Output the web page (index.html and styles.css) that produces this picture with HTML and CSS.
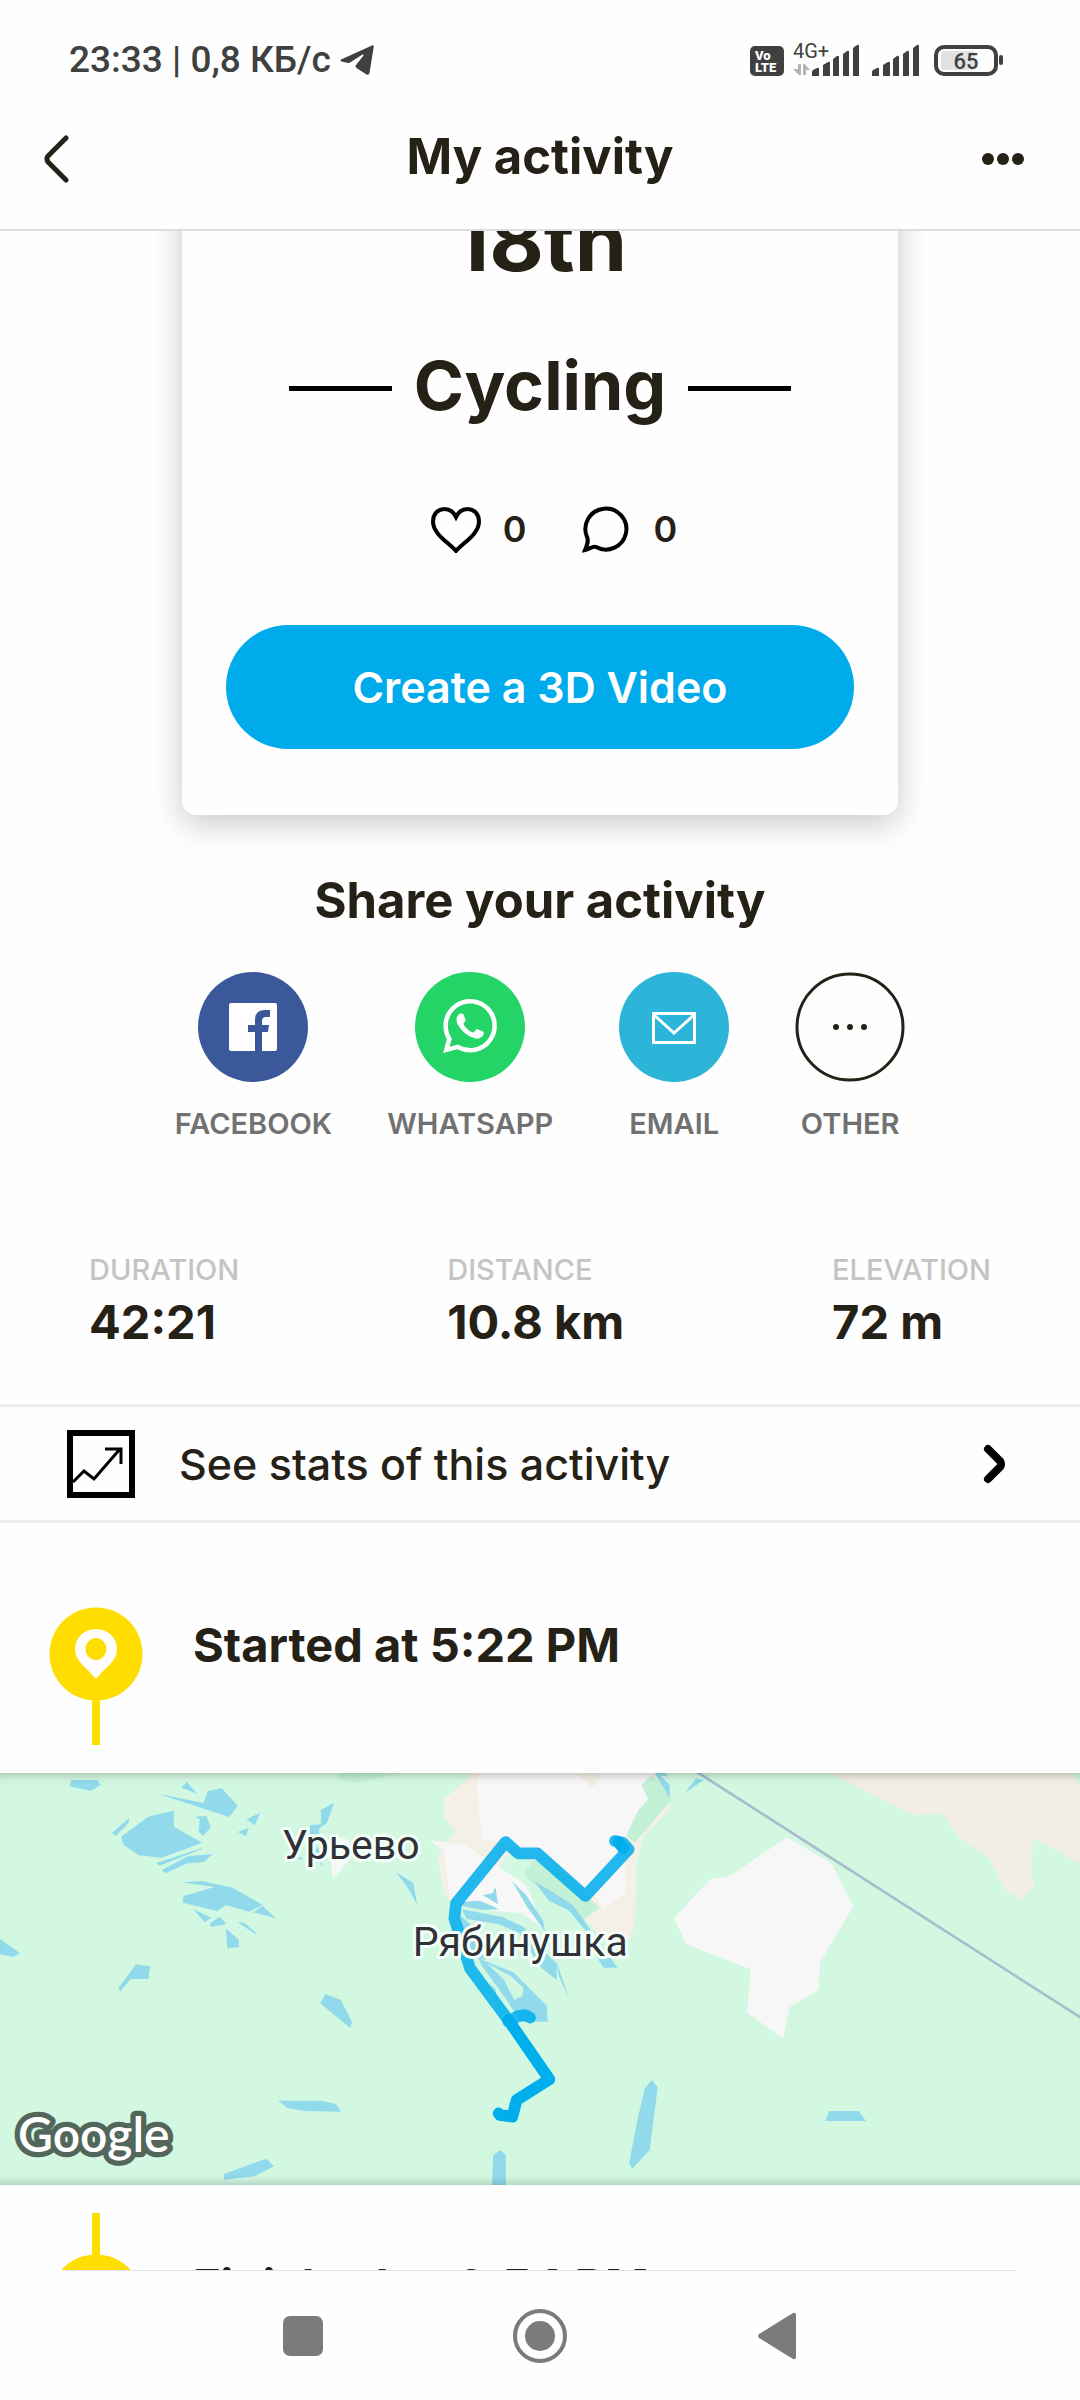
FILE: index.html
```
<!DOCTYPE html>
<html lang="en">
  <head>
    <meta charset="utf-8">
    <meta name="viewport" content="width=device-width, initial-scale=1">
    <title>My activity</title>
    <link rel="stylesheet" href="styles.css">
  </head>
  <body>
    <header class="top">
      <!-- Status bar -->
      <div class="status-bar">
        <span class="status-text">23:33 | 0,8 КБ/с</span>
        <svg class="telegram" viewBox="0 0 34 30" width="34" height="30">
          <path d="M1 14.500 32 .5q2-1 1.700 1.500L29.500 28q-.5 2.500-3 1.500L16.500 23q-2-1.500-.5-3L23.500 10.500q.5-1.500-1-1L10 17.500q-1.500.8-3 .3L1.500 16.500Q-.5 15.500 1 14.500z"/>
        </svg>
        <div class="status-icons">
          <svg viewBox="0 0 34 34" width="34" height="34">
            <rect y="3" width="34" height="30" rx="5"/>
            <text class="volte" x="5" y="17">Vo</text>
            <text class="volte" x="5" y="29">LTE</text>
          </svg>
          <svg class="signal-first" viewBox="0 0 67 34" width="67" height="34">
            <text class="network" x="0" y="15">4G+</text>
            <path class="data-arrows" d="M5 21h3v11H6l-6-6h5zM10 32V21h2l5 6h-4v5z"/>
            <path d="M19 33v-4q0-1 1-2l4-2q2-1 2 1v7zM30 33V22l5-3q2-1 2 1v13zM40 33V16l4-3q2-1 2 1v19zM50 33V11l4-3q2-1 2 1v24zM60 33V5l4-3q2-1 2 1v30z"/>
          </svg>
          <svg class="signal-second" viewBox="19 0 48 34" width="48" height="34">
            <path d="M19 33v-4q0-1 1-2l4-2q2-1 2 1v7zM30 33V22l5-3q2-1 2 1v13zM40 33V16l4-3q2-1 2 1v19zM50 33V11l4-3q2-1 2 1v24zM60 33V5l4-3q2-1 2 1v30z"/>
          </svg>
          <svg class="battery" viewBox="0 0 70 34" width="70" height="34">
            <rect class="battery-case" x="2" y="4" width="60" height="27" rx="8"/>
            <rect class="battery-level" x="7" y="8" width="34" height="19" rx="3"/>
            <rect x="65" y="12" width="4" height="10" rx="2"/>
            <text class="battery-text" x="32" y="26">65</text>
          </svg>
        </div>
      </div>

      <!-- App bar -->
      <div class="app-bar">
        <button class="icon-button" type="button" aria-label="Back">
          <svg class="back-icon" viewBox="0 0 26 48" width="26" height="48">
            <path d="M22 3 4 21q-2 3 0 6l18 18"/>
          </svg>
        </button>
        <h1 class="app-title">My activity</h1>
        <button class="icon-button" type="button" aria-label="More">
          <svg class="more-icon" viewBox="0 0 42 12" width="42" height="12">
            <circle cx="6" cy="6" r="6"/>
            <circle cx="21" cy="6" r="6"/>
            <circle cx="36" cy="6" r="6"/>
          </svg>
        </button>
      </div>
    </header>

    <main class="content">
      <!-- Activity card -->
      <section class="card">
        <h2 class="card-date">18th</h2>
        <div class="card-sport">
          <span class="dash"></span>
          <h3 class="sport-name">Cycling</h3>
          <span class="dash"></span>
        </div>
        <div class="reactions">
          <button class="reaction" type="button" aria-label="Likes">
            <svg viewBox="0 0 50 48" width="50" height="48">
              <path d="M25 46C17 37 2 29 2 16.500 2 9 7 4 13.500 4 18.500 4 22.500 7 25 12 27.500 7 31.500 4 36.500 4 43 4 48 9 48 16.500 48 29 33 37 25 46z"/>
            </svg>
            <span>0</span>
          </button>
          <button class="reaction" type="button" aria-label="Comments">
            <svg viewBox="0 0 50 48" width="50" height="48">
              <path d="M3 45C5 40 7 36 5 32A20.500 20.500 0 1 1 14 42C10 41 8 44 3 45z"/>
            </svg>
            <span>0</span>
          </button>
        </div>
        <button class="video-button" type="button">Create a 3D Video</button>
      </section>

      <!-- Share -->
      <section class="share">
        <h2 class="share-title">Share your activity</h2>
        <div class="share-list">
          <button class="share-item" type="button">
            <svg class="share-icon" viewBox="0 0 110 110" width="110" height="110">
              <circle cx="55" cy="55" r="55" fill="#3b589b"/>
              <rect x="31" y="31" width="48" height="48" rx="2" fill="#fff"/>
              <path fill="#3b589b" d="M57 79V60H50V53H57V48Q57 38 67 38H72V45H68Q64 45 64 49V53H71L70 60H64V79z"/>
            </svg>
            <span>FACEBOOK</span>
          </button>
          <button class="share-item" type="button">
            <svg class="share-icon" viewBox="0 0 110 110" width="110" height="110">
              <circle cx="55" cy="55" r="55" fill="#25d466"/>
              <path fill="#fff" transform="translate(28 27) scale(2.250)" d="M17.472 14.382c-.297-.149-1.758-.867-2.030-.967-.273-.099-.471-.148-.67.15-.197.297-.767.966-.94 1.164-.173.199-.347.223-.644.075-.297-.15-1.255-.463-2.390-1.475-.883-.788-1.480-1.761-1.653-2.059-.173-.297-.018-.458.13-.606.134-.133.298-.347.446-.52.149-.174.198-.298.298-.497.099-.198.05-.371-.025-.52-.075-.149-.669-1.612-.916-2.207-.242-.579-.487-.5-.669-.51-.173-.008-.371-.01-.57-.01-.198 0-.52.074-.792.372-.272.297-1.040 1.016-1.040 2.479 0 1.462 1.065 2.875 1.213 3.074.149.198 2.096 3.200 5.077 4.487.709.306 1.262.489 1.694.625.712.227 1.360.195 1.871.118.571-.085 1.758-.719 2.006-1.413.248-.694.248-1.289.173-1.413-.074-.124-.272-.198-.57-.347m-5.421 7.403h-.004a9.870 9.870 0 0 1-5.031-1.378l-.361-.214-3.741.982.998-3.648-.235-.374a9.860 9.860 0 0 1-1.510-5.260c.001-5.450 4.436-9.884 9.888-9.884 2.640 0 5.122 1.030 6.988 2.898a9.825 9.825 0 0 1 2.893 6.994c-.003 5.450-4.437 9.884-9.885 9.884m8.413-18.297A11.815 11.815 0 0 0 12.050 0C5.495 0 .16 5.335.157 11.892c0 2.096.547 4.142 1.588 5.945L.057 24l6.305-1.654a11.882 11.882 0 0 0 5.683 1.448h.005c6.554 0 11.890-5.335 11.893-11.893a11.821 11.821 0 0 0-3.480-8.413z"/>
            </svg>
            <span>WHATSAPP</span>
          </button>
          <button class="share-item" type="button">
            <svg class="share-icon" viewBox="0 0 110 110" width="110" height="110">
              <circle cx="55" cy="55" r="55" fill="#2cb5d8"/>
              <path fill="none" stroke="#fff" stroke-width="3" d="M34.500 41.500h41v29h-41zM35 43l20 18 20-18"/>
            </svg>
            <span>EMAIL</span>
          </button>
          <button class="share-item" type="button">
            <svg class="share-icon" viewBox="0 0 110 110" width="110" height="110">
              <circle cx="55" cy="55" r="53" fill="none" stroke="#252117" stroke-width="3"/>
              <g fill="#252117">
                <circle cx="41" cy="55" r="3"/>
                <circle cx="55" cy="55" r="3"/>
                <circle cx="69" cy="55" r="3"/>
              </g>
            </svg>
            <span>OTHER</span>
          </button>
        </div>
      </section>

      <!-- Totals -->
      <dl class="totals">
        <div>
          <dt>DURATION</dt>
          <dd>42:21</dd>
        </div>
        <div>
          <dt>DISTANCE</dt>
          <dd>10.8 km</dd>
        </div>
        <div>
          <dt>ELEVATION</dt>
          <dd>72 m</dd>
        </div>
      </dl>

      <a class="stats-link" href="#stats">
        <svg class="chart-icon" viewBox="0 0 68 68" width="68" height="68">
          <rect x="3" y="3" width="62" height="62" fill="none" stroke="#000" stroke-width="6"/>
          <path fill="none" stroke="#000" stroke-width="3" d="M6 52 17 41l10 8L53 19M38 19h16v15"/>
        </svg>
        <span class="stats-text">See stats of this activity</span>
        <svg class="chevron" viewBox="0 0 24 40" width="24" height="40">
          <path d="M5 5 17 17q2 3 0 6L5 35"/>
        </svg>
      </a>

      <!-- Timeline -->
      <section class="timeline">
        <div class="stop stop-start">
          <svg viewBox="0 0 94 138" width="94" height="138">
            <path fill="#fd0" d="M43 90h8v48h-8z"/>
            <circle cx="47" cy="47" r="46.500" fill="#fd0"/>
            <path fill="#fff" fill-rule="evenodd" d="M47 72C38 61 26 54 26 42a21 20 0 0 1 42 0C68 54 56 61 47 72zM47 53a10.500 11 0 1 0 0-22 10.500 11 0 0 0 0 22z"/>
          </svg>
          <h3 class="stop-title">Started at 5:22 PM</h3>
        </div>

        <div class="map">
          <svg class="map-art" viewBox="0 39 3240 1236">
            <rect y="39" width="3240" height="1236" fill="#d3f8e2"/>
            <!-- west lakes -->
            <g transform="scale(1.033 1)">
              <path fill="#c3f1d5" d="M982 39h175l-120 30-55-12z"/>
              <path class="land" d="M960 225l55 15v60l-48 57-5-38z"/>
              <g class="water">
                <path d="M207 60h75l10 15-28 18-62-14zM526 83l17-17 29 35zM461 102l130 27 12-35 40-10 48 53-26 34zM325 219l49-44v13l-38 40zM352 230l78-60 75-18v48l82 48-117 45-68-7-45-33zM566 170l33-2 14 34-24 25-12-12 3-37zM716 178l39-19-15 37zM690 216l32-12-7 24zM454 309l133-45v3L463 317zM470 331l75-42 72-7-26 25-47 3-63 30zM526 367l59-4 90 20 87 51-38 21-68-20-25 18-100-25 2-20 90-27zM560 446l53 27-18 14zM610 490l28-20 20 22-45 9zM735 457l27-20 39 38zM690 486l18 2 36 31-4 3zM656 505l38 35v22l-34 2zM0 537l58 43-22 11-36-9zM395 613l41 6-5 38h-52l-30 38-5-11zM930 730l15-28 45 18 32 65-4 20zM1150 337l50 32 11 63-26-48zM932 150l38-22-20 60-23 17v30h-27v-40l32-2zM807 1022h125l43 10 16 23-105-2-50-8zM650 1242l123-46 23 23-57 30-88 10zM1429 1275l3-90 22-15 15 15v90z"/>
                <path d="M920 260l10 15-8 25-10-10zM930 300l8 15-6 4zM862 290l18 4-10 6z"/>
              </g>
            </g>
            <!-- town -->
            <g transform="translate(1200 0)">
              <path class="sand" d="M205 39v16l-73 63v54l33 38-23 40-29 40 19 110 18 20 150-100 20-35 230 140 10 60 40 55h90l15-45 3-180 20-83 84-87-32-55-15-51z"/>
              <path fill="#d3f8e2" d="M325 285l70 15-20 35 5 20 125 92 42 33 25 12 30 48H430l-50-165-70-55z"/>
              <path fill="#c3f1d5" d="M375 335l25-35 70 35 85 70 45 38-54 38-42-34-124-92z"/>
              <path class="land" d="M243 39l-14 26 17 175 75 5 60 40 55-5 118 110 32 20 24 33 70-45-5-98 3-72 67-110-20-43 30-27 10-9z"/>
              <path class="land" d="M90 240l105 15 105 68 80 52 50 130-65-45-115-10-100-30-18-145z"/>
              <path class="sand" d="M527 39h83l-33 44z"/>
              <path fill="#c3f1d5" d="M725 75l25-27 25 12 40 58-110 130-27-20 37-78 30-32z"/>
              <g class="water">
                <path d="M765 39h32l5 10-20-2 27 28v40l-20-35zM855 98l33-43 24 5zM0 345l40 25 10 62-25-48zM336 363l42 42 50 75 8 35-55-75zM402 364l45 25 70 45 30 40 25 35-15 3-50-60-60-30zM248 405l30-5 8-20 8 53zM185 425l55-3 57 26-50 2-65-12zM185 448l120 22 65 30-5 22-70-30-95-15zM180 465l50 45 30 90-60-10zM370 500l50 60 50 50v50l-45-35-40-60-30-50zM470 605l36 107-30-65zM590 590l20 33h42l-20-30zM235 595l105 42 100 100 3 48h-80l-55-82-62-85zM270 670l18 20v20z"/>
              </g>
              <path fill="#d3f8e2" d="M260 610l72 38 38 35-3 25-24 12-32-62z"/>
              <path class="water" d="M755 960l18 22-24 188-52 56-10-15 25-130 22-95z"/>
              <g class="route">
                <path d="M645 243l23 5 18 20L556 408 412 280H355L317 246 168 430l-5 45 47 150 115 155"/>
                <path d="M325 785l28-16 22-4 15 8"/>
              </g>
              <path class="route-back" d="M325 780L448 958 350 1020 337 1070 300 1065 296 1060M655 246l14 18"/>
            </g>
            <!-- east side -->
            <g transform="translate(1800 0)">
              <path fill="#f2eee3" d="M690 39h750v273l-140-80-7 100 10 50-42 37-45-30-50-97-89-60-50-73-82 7z"/>
              <path fill="#d3f8e2" d="M1418 39h22v37z"/>
              <path class="land" d="M560 232l135 78 64 130-100 170-3 80-87 50-20 96-107-78 10-130-192-75-38-78 108-117 60-10z"/>
              <path class="water" d="M688 1053h88l22 30H675z"/>
              <path fill="none" stroke="#a8bcca" stroke-width="8" d="M280 29L1450 778"/>
            </g>
            <text class="place" x="846" y="298">Урьево</text>
            <text class="place" x="1238" y="588">Рябинушка</text>
            <text class="google" x="54" y="1176">Google</text>
          </svg>
        </div>

        <div class="stop stop-end">
          <svg viewBox="0 0 94 138" width="94" height="138">
            <path fill="#fd0" d="M43 0h8v49h-8z"/>
            <circle cx="47" cy="88" r="46.500" fill="#fd0"/>
          </svg>
          <h3 class="stop-title">Finished at 6:54 PM</h3>
        </div>
      </section>
    </main>

    <nav class="system-nav">
      <button class="nav-button" type="button" aria-label="Recent apps">
        <svg viewBox="0 0 60 60" width="60" height="60"><rect x="10" y="10" width="40" height="40" rx="7"/></svg>
      </button>
      <button class="nav-button" type="button" aria-label="Home">
        <svg viewBox="0 0 60 60" width="60" height="60">
          <circle cx="30" cy="30" r="25" fill="none" stroke="#7b7b7b" stroke-width="4"/>
          <circle cx="30" cy="30" r="15"/>
        </svg>
      </button>
      <button class="nav-button" type="button" aria-label="Back">
        <svg viewBox="0 0 60 60" width="60" height="60"><path d="M12 28 46 7q3-1 3 2v42q0 3-3 2L12 32q-2-2 0-4z"/></svg>
      </button>
    </nav>
  </body>
</html>
```
FILE: styles.css
```
* {
  box-sizing: border-box;
}
body {
  margin: 0;
  height: 100vh;
  display: flex;
  flex-direction: column;
  background: #fefefe;
  color: #252117;
  font-family: Inter, "Liberation Sans", sans-serif;
}
h1,
h2,
h3,
dl,
dd {
  margin: 0;
}
button {
  padding: 0;
  border: none;
  background: none;
  color: inherit;
  font: inherit;
  cursor: pointer;
}
svg {
  display: block;
  flex-shrink: 0;
}

/* Header */
.top {
  flex-shrink: 0;
  border-bottom: 2px solid #dedede;
}
.status-bar {
  display: flex;
  align-items: center;
  padding: 38px 76px 0 69px;
  color: #404040;
  fill: #404040;
  font-family: Roboto, sans-serif;
}
.status-bar svg {
  overflow: visible;
}
.status-text {
  font-size: 37px;
  line-height: 44px;
  font-weight: 500;
}
.telegram {
  margin-left: 9px;
}
.status-icons {
  display: flex;
  margin-left: auto;
}
.signal-first {
  margin-left: 9px;
}
.signal-second {
  margin-left: 12px;
}
.battery {
  margin-left: 14px;
}
.volte {
  fill: #fff;
  font-size: 13px;
  font-weight: 900;
}
.network {
  font-size: 20px;
}
.data-arrows {
  fill: #b5b5b5;
}
.battery-case {
  fill: none;
  stroke: #404040;
  stroke-width: 4;
}
.battery-level {
  fill: #e2e2e2;
}
.battery-text {
  font-size: 22px;
  font-weight: 500;
  text-anchor: middle;
}
.app-bar {
  display: flex;
  align-items: center;
  justify-content: space-between;
  height: 147px;
  padding: 6px 44px 0;
}
.icon-button {
  width: 54px;
  padding: 16px 0;
}
.back-icon {
  fill: none;
  stroke: #252117;
  stroke-width: 5;
  stroke-linecap: round;
}
.more-icon {
  fill: #252117;
}
.app-title {
  margin-bottom: 4px;
  font-size: 49px;
  line-height: 60px;
  font-weight: 700;
}

/* Scrolled content */
.content {
  flex: 1;
  min-height: 0;
  overflow: hidden;
}
.card {
  margin: -96px 182px 0;
  padding: 58px 44px 66px;
  border-radius: 14px;
  background: #fefefe;
  box-shadow: 0 8px 32px rgba(0, 0, 0, 0.22);
  text-align: center;
}
.card-date {
  font-size: 84px;
  line-height: 96px;
}
.card-sport {
  display: flex;
  align-items: center;
  justify-content: center;
  gap: 22px;
  margin-top: 56px;
}
.dash {
  width: 103px;
  height: 5px;
  margin-top: 6px;
  background: #000;
}
.sport-name {
  font-size: 68px;
  line-height: 80px;
}
.reactions {
  display: flex;
  justify-content: center;
  gap: 55px;
  margin-top: 80px;
  padding-left: 28px;
}
.reaction {
  display: flex;
  align-items: center;
  gap: 22px;
  font-size: 36px;
  line-height: 48px;
  font-weight: 600;
}
.reaction svg {
  fill: none;
  stroke: #000;
  stroke-width: 4;
}
.video-button {
  width: 100%;
  height: 124px;
  margin-top: 72px;
  border-radius: 62px;
  background: #00abec;
  color: #fff;
  font-size: 43px;
  font-weight: 600;
}

/* Share */
.share {
  margin-top: 56px;
  text-align: center;
}
.share-title {
  font-size: 49px;
  line-height: 60px;
}
.share-list {
  display: flex;
  justify-content: center;
  gap: 55px;
  margin-top: 41px;
}
.share-item {
  display: flex;
  flex-direction: column;
  align-items: center;
  gap: 24px;
  min-width: 110px;
  color: #717171;
  font-size: 29px;
  line-height: 36px;
  font-weight: 600;
}
.share-item:nth-child(3) {
  min-width: 132px;
}

/* Totals */
.totals {
  display: flex;
  justify-content: space-between;
  margin-top: 110px;
  padding: 0 89px 52px;
}
.totals dt {
  color: #c4c4c4;
  font-size: 29px;
  line-height: 36px;
  font-weight: 500;
}
.totals dd {
  margin-top: 4px;
  font-size: 47px;
  line-height: 60px;
  font-weight: 700;
}
.stats-link {
  display: flex;
  align-items: center;
  padding: 23px 73px 22px 67px;
  border-top: 3px solid #ececec;
  border-bottom: 3px solid #ececec;
  color: inherit;
  text-decoration: none;
}
.stats-text {
  flex: 1;
  margin-left: 44px;
  font-size: 43px;
  font-weight: 500;
}
.chevron {
  fill: none;
  stroke: #000;
  stroke-width: 8;
  stroke-linecap: round;
}

/* Timeline */
.stop {
  display: flex;
  gap: 50px;
  padding: 28px 49px;
}
.stop-start {
  padding-top: 84px;
}
.stop-title {
  margin-top: 8px;
  font-size: 47px;
  line-height: 60px;
}
.stop-end .stop-title {
  margin-top: 43px;
}
.map {
  position: relative;
}
.map-art {
  width: 100%;
}
/* soft edge above and below the map */
.map::after {
  content: "";
  position: absolute;
  inset: 0;
  box-shadow: inset 0 10px 10px -8px rgba(0, 0, 0, 0.25),
    inset 0 -10px 10px -8px rgba(0, 0, 0, 0.2);
}
.land {
  fill: #f7f7f7;
}
.sand {
  fill: #f5f0e5;
}
.water {
  fill: #90daec;
}
.route,
.route-back {
  fill: none;
  stroke: #00aeee;
  stroke-width: 35;
  stroke-linejoin: round;
  stroke-linecap: round;
}
.route {
  opacity: 0.86;
}
.place {
  fill: #303238;
  stroke: #f5fffa;
  stroke-width: 18;
  stroke-linejoin: round;
  paint-order: stroke;
  font-family: Roboto, sans-serif;
  font-size: 123px;
}
.google {
  fill: #fff;
  stroke: #53665b;
  stroke-width: 32;
  stroke-linejoin: round;
  paint-order: stroke;
  font-family: Lato, sans-serif;
  font-size: 144px;
  font-weight: 600;
}

/* System navigation */
.system-nav {
  flex-shrink: 0;
  display: flex;
  align-items: center;
  justify-content: center;
  gap: 177px;
  height: 130px;
  margin: 0 65px;
  border-top: 1px solid #e2e2e2;
  fill: #7b7b7b;
}
```
